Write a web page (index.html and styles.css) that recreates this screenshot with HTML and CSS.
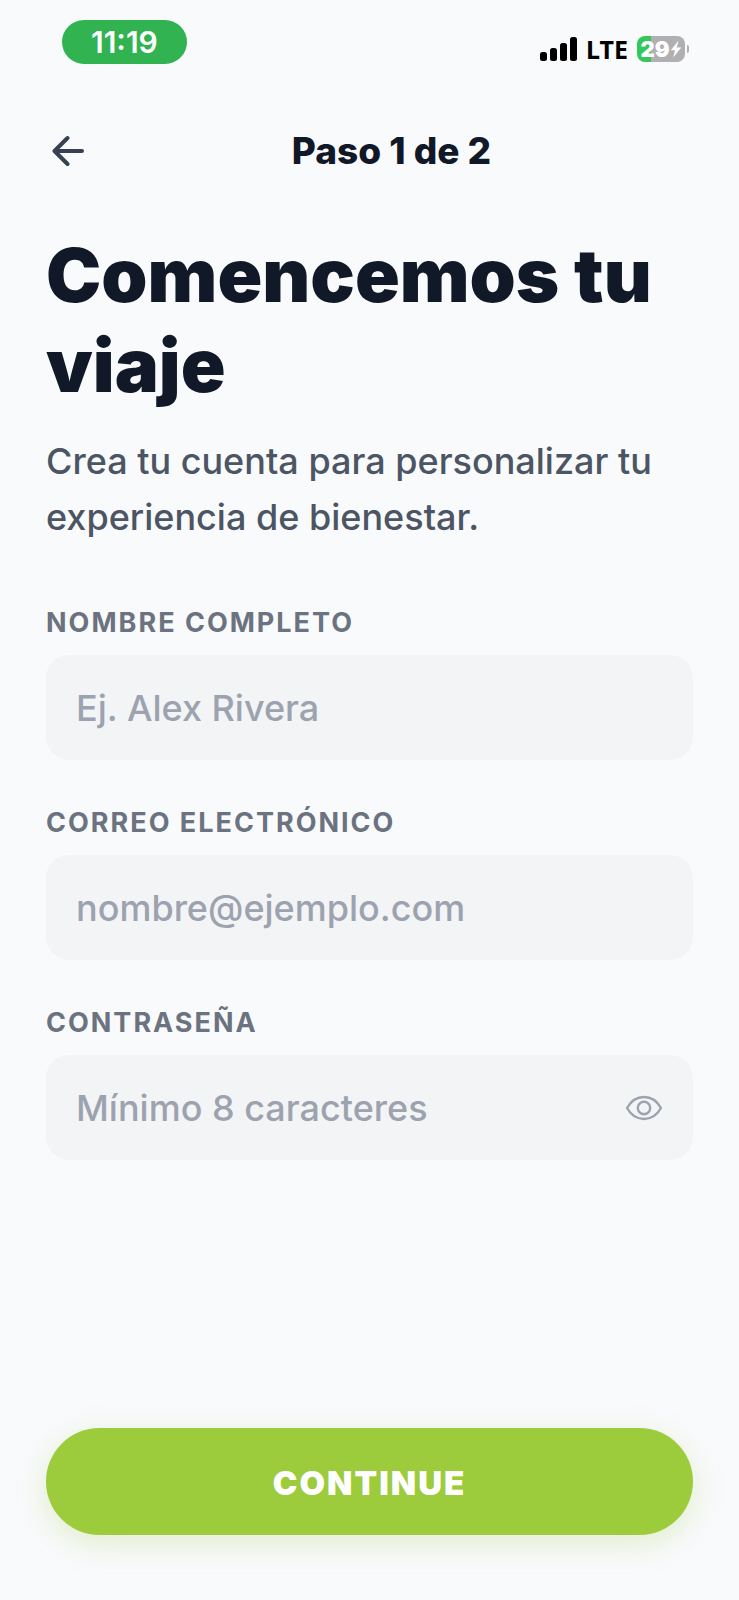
FILE: index.html
```html
<!DOCTYPE html>
<html lang="es">
<head>
<meta charset="utf-8">
<meta name="viewport" content="width=device-width, initial-scale=1">
<title>Comencemos tu viaje</title>
<link rel="stylesheet" href="styles.css">
</head>
<body>
<div class="screen">
  <div class="status-bar">
    <span class="clock">11:19</span>
    <div class="status-icons">
      <svg class="signal" viewBox="0 0 37 24" aria-hidden="true">
        <rect x="0" y="15" width="7" height="9" rx="2.5"/>
        <rect x="10" y="11" width="7" height="13" rx="2.5"/>
        <rect x="20" y="6" width="7" height="18" rx="2.5"/>
        <rect x="30" y="0" width="7" height="24" rx="2.5"/>
      </svg>
      <span class="network">LTE</span>
      <div class="battery">
        <span class="battery-body"><span class="battery-level">29</span><svg class="bolt" viewBox="0 0 12 18" aria-hidden="true"><path d="M8.5 0.5 0.8 10.2H5L3.2 17.5 11.3 7.4H6.8Z"/></svg></span>
        <span class="battery-tip"></span>
      </div>
    </div>
  </div>

  <header class="top-bar">
    <button class="back" type="button" aria-label="Volver">
      <svg class="back-icon" viewBox="0 0 32 32" aria-hidden="true"><path d="M15.5 3 2.5 16l13 13M2.5 16H30"/></svg>
    </button>
    <span class="step">Paso 1 de 2</span>
  </header>

  <main class="content">
    <h1 class="title">Comencemos tu viaje</h1>
    <p class="subtitle">Crea tu cuenta para personalizar tu experiencia de bienestar.</p>
    <form class="form" id="signup">
      <div class="field">
        <label class="label" for="name">NOMBRE COMPLETO</label>
        <div class="box"><input class="input" id="name" type="text" placeholder="Ej. Alex Rivera"></div>
      </div>
      <div class="field">
        <label class="label" for="email">CORREO ELECTRÓNICO</label>
        <div class="box"><input class="input" id="email" type="email" placeholder="nombre@ejemplo.com"></div>
      </div>
      <div class="field">
        <label class="label" for="password">CONTRASEÑA</label>
        <div class="box">
          <input class="input" id="password" type="password" placeholder="Mínimo 8 caracteres">
          <button class="reveal" type="button" aria-label="Mostrar contraseña">
            <svg class="eye" viewBox="0 0 38 26" aria-hidden="true"><path d="M2 13C6 6 12 2 19 2s13 4 17 11c-4 7-10 11-17 11S6 20 2 13Z"/><circle cx="19" cy="13" r="6.2"/></svg>
          </button>
        </div>
      </div>
    </form>
  </main>

  <footer class="footer">
    <button class="continue" type="submit" form="signup">CONTINUE</button>
  </footer>
</div>
</body>
</html>
```
FILE: styles.css
```css
* {
  box-sizing: border-box;
}

body {
  margin: 0;
  background: #f9fafc;
  color: #111827;
  font-family: Inter, "Liberation Sans", sans-serif;
}

.screen {
  display: flex;
  flex-direction: column;
  min-height: 100vh;
}

.status-bar {
  display: flex;
  justify-content: space-between;
  align-items: flex-start;
  padding: 20px 50px 0 62px;
}

.clock {
  padding: 0 29px;
  border-radius: 22px;
  background: #30b350;
  color: #fff;
  font-size: 30px;
  font-weight: 600;
  line-height: 44px;
}

.status-icons {
  display: flex;
  align-items: center;
  padding-top: 14px;
}

.signal {
  width: 37px;
  height: 24px;
  fill: #000;
}

.network {
  margin: 0 9px;
  color: #000;
  font-family: "Noto Sans", sans-serif;
  font-size: 25px;
  font-weight: 700;
  line-height: 30px;
}

.battery {
  display: flex;
  align-items: center;
  gap: 2px;
}

.battery-body {
  display: flex;
  align-items: center;
  justify-content: center;
  width: 48px;
  height: 26px;
  border-radius: 8px;
  background: linear-gradient(to right, #34c759 29%, #b0b0b2 29%);
}

.battery-level {
  color: #fff;
  font-size: 22px;
  font-weight: 900;
  line-height: 26px;
}

.bolt {
  width: 12px;
  height: 18px;
  fill: #fff;
}

.battery-tip {
  width: 2px;
  height: 8px;
  border-radius: 0 2px 2px 0;
  background: #b0b0b2;
}

.top-bar {
  display: grid;
  grid-template-columns: 44px 1fr;
  align-items: center;
  margin-top: 64px;
  padding: 0 46px;
}

.back {
  display: flex;
  justify-content: center;
  padding: 6px 0;
  border: 0;
  background: none;
}

.back-icon {
  width: 32px;
  height: 32px;
  fill: none;
  stroke: #374151;
  stroke-width: 4;
  stroke-linecap: round;
  stroke-linejoin: round;
}

.step {
  font-size: 37px;
  font-weight: 800;
  line-height: 46px;
  text-align: center;
}

.content {
  padding: 56px 46px 0;
}

.title {
  margin: 0;
  font-size: 74px;
  font-weight: 900;
  line-height: 90px;
}

.subtitle {
  margin: 23px 0 0;
  color: #4b5563;
  font-size: 36px;
  font-weight: 500;
  line-height: 56px;
}

.form {
  display: grid;
  grid-template-columns: minmax(0, 1fr);
  gap: 46px;
  margin-top: 61px;
}

.field {
  display: grid;
  grid-template-columns: minmax(0, 1fr);
  gap: 15px;
}

.label {
  color: #6b7280;
  font-size: 27px;
  font-weight: 700;
  line-height: 34px;
  letter-spacing: 2px;
}

.box {
  display: flex;
  align-items: center;
  height: 105px;
  padding: 0 30px;
  border-radius: 23px;
  background: #f3f4f6;
}

.input {
  flex: 1;
  min-width: 0;
  padding: 0;
  border: 0;
  outline: 0;
  background: none;
  color: #111827;
  font-family: inherit;
  font-size: 36px;
  font-weight: 500;
  line-height: 46px;
}

.input::placeholder {
  color: #9ca3af;
  opacity: 1;
}

.reveal {
  display: flex;
  padding: 0;
  border: 0;
  background: none;
}

.eye {
  width: 38px;
  height: 26px;
  fill: none;
  stroke: #9ca3af;
  stroke-width: 2.4;
  stroke-linejoin: round;
}

.footer {
  margin-top: auto;
  padding: 46px 46px 65px;
}

.continue {
  display: block;
  width: 100%;
  height: 107px;
  padding: 2px 0 0;
  border: 0;
  border-radius: 54px;
  background: #9ccc3c;
  box-shadow: 0 8px 30px rgba(156, 204, 60, 0.25);
  color: #fff;
  font-family: inherit;
  font-size: 33px;
  font-weight: 900;
  letter-spacing: 2px;
}
```
